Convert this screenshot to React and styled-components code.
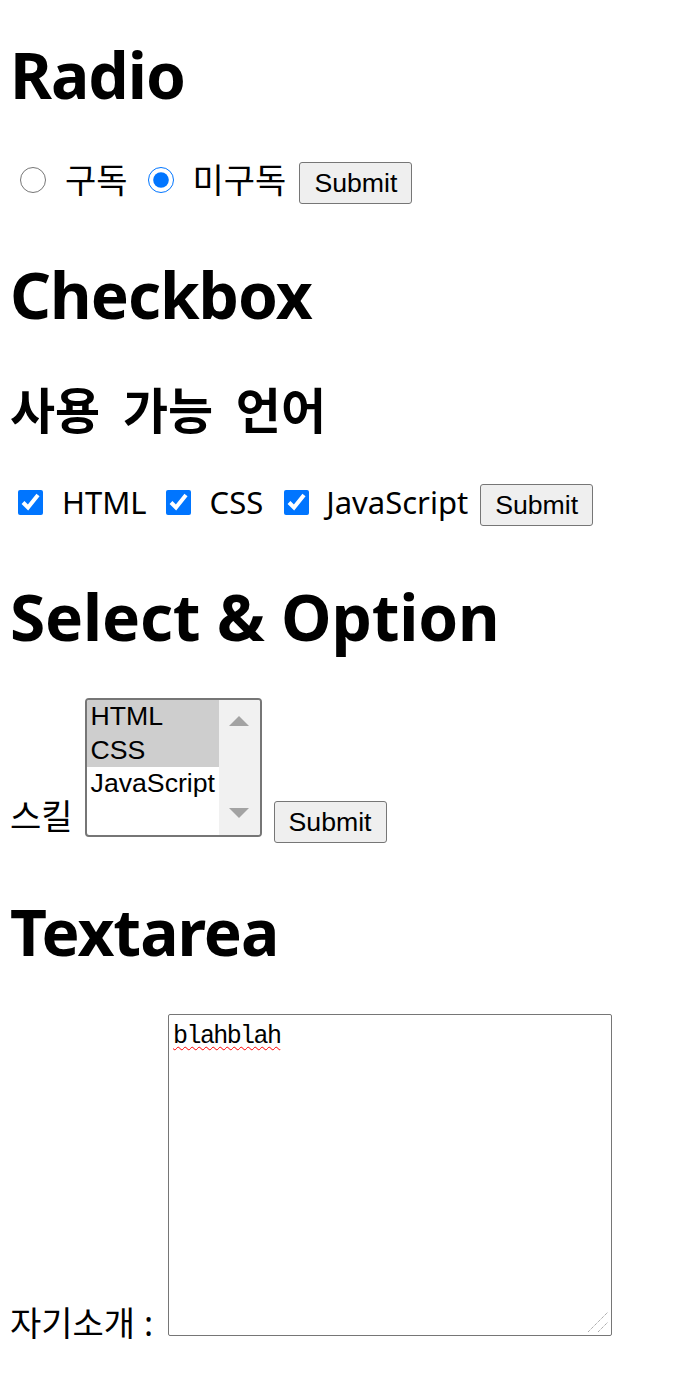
import React from 'react'
import styled, { createGlobalStyle } from 'styled-components'

const GlobalStyle = createGlobalStyle`
    body {
        margin: 0;
        background: #fff;
        color: #000;
        font-family: "Noto Sans", "Noto Sans CJK KR", sans-serif;
    }
`

const Page = styled.main`
    padding: 0 10px 40px;
`

const Title = styled.h1`
    margin: ${p => p.$mt}px 0 0;
    font-size: 64px;
    line-height: 64px;
    font-weight: 700;
    letter-spacing: ${p => p.$ls ?? -1}px;
`

const SubTitle = styled.h2`
    margin: ${p => p.$mt}px 0 0;
    font-size: 49px;
    line-height: 48px;
    font-weight: 700;
    word-spacing: 10px;
`

const Row = styled.form`
    display: flex;
    align-items: ${p => p.$align || 'center'};
    margin-top: ${p => p.$mt}px;
`

const Choice = styled.label`
    display: flex;
    align-items: center;
    margin-left: ${p => p.$ml}px;
    margin-bottom: 6px;
    font-size: ${p => p.$fs}px;
    line-height: 36px;
    white-space: nowrap;
`

const Toggle = styled.input`
    width: ${p => p.$size}px;
    height: ${p => p.$size}px;
    margin: 0 ${p => p.$gap}px 0 0;
    flex: none;
`

const Submit = styled.button`
    flex: none;
    margin-left: ${p => p.$ml}px;
    height: 42px;
    padding: 0 14px;
    border: 1px solid #767676;
    border-radius: 3px;
    background: #efefef;
    color: #000;
    font-family: "Liberation Sans", Arial, sans-serif;
    font-size: 26.67px;
    line-height: 40px;
`

const FieldLabel = styled.label`
    font-size: 34px;
    line-height: 32px;
    margin-right: ${p => p.$mr}px;
    margin-bottom: ${p => p.$mb}px;
    white-space: nowrap;
`

const ListBox = styled.div`
    display: flex;
    width: 177px;
    height: 139px;
    box-sizing: border-box;
    margin-bottom: 6px;
    border: 2px solid #767676;
    border-radius: 4px;
    background: #fff;
    overflow: hidden;
`

const OptionList = styled.div`
    flex: 1;
`

const OptionItem = styled.div`
    height: 33.5px;
    padding: 0 4px;
    background: ${p => (p.$selected ? '#cecece' : 'transparent')};
    font-family: "Liberation Sans", Arial, sans-serif;
    font-size: 26.67px;
    line-height: 33px;
    white-space: nowrap;
`

const ScrollTrack = styled.div`
    display: flex;
    flex-direction: column;
    justify-content: space-between;
    width: 41px;
    background: #f1f1f1;
`

const ScrollArrow = styled.div`
    display: flex;
    align-items: center;
    justify-content: center;
    height: ${p => p.$h}px;

    &::after {
        content: '';
        border-left: 10px solid transparent;
        border-right: 10px solid transparent;
        ${p => (p.$down ? 'border-top' : 'border-bottom')}: 10px solid #a3a3a3;
    }
`

const TextBox = styled.div`
    position: relative;
    width: 444px;
    height: 322px;
    box-sizing: border-box;
    margin-bottom: 3px;
    padding: 7px 4px;
    border: 1px solid #767676;
    border-radius: 2px;
    background: #fff;
    font-family: "Liberation Mono", monospace;
    font-size: 25px;
    line-height: 30px;
    letter-spacing: -1.6px;
`

const Misspelled = styled.span`
    text-decoration: underline wavy #ff0000;
    text-decoration-thickness: 1px;
    text-underline-offset: 3px;
`

const Grip = styled.svg`
    position: absolute;
    right: 2px;
    bottom: 2px;
`

const skills = [
    { id: 'html', name: 'HTML', selected: true },
    { id: 'css', name: 'CSS', selected: true },
    { id: 'js', name: 'JavaScript', selected: false },
]

const App = () => {
    return (
        <Page>
            <GlobalStyle />

            <Title $mt={43}>Radio</Title>
            <Row $mt={55} onSubmit={e => e.preventDefault()}>
                <Choice $ml={10} $fs={34}>
                    <Toggle type='radio' name='subscribe' $size={26} $gap={19} />
                    구독
                </Choice>
                <Choice $ml={20} $fs={34}>
                    <Toggle type='radio' name='subscribe' $size={26} $gap={19} defaultChecked />
                    미구독
                </Choice>
                <Submit $ml={13}>Submit</Submit>
            </Row>

            <Title $mt={59}>Checkbox</Title>
            <SubTitle $mt={59}>사용 가능 언어</SubTitle>
            <Row $mt={50} onSubmit={e => e.preventDefault()}>
                <Choice $ml={8} $fs={31}>
                    <Toggle type='checkbox' $size={25} $gap={19} defaultChecked />
                    HTML
                </Choice>
                <Choice $ml={19} $fs={31}>
                    <Toggle type='checkbox' $size={25} $gap={19} defaultChecked />
                    CSS
                </Choice>
                <Choice $ml={21} $fs={31}>
                    <Toggle type='checkbox' $size={25} $gap={17} defaultChecked />
                    JavaScript
                </Choice>
                <Submit $ml={12}>Submit</Submit>
            </Row>

            <Title $mt={59} $ls={-0.2}>Select &amp; Option</Title>
            <Row $mt={49} $align='flex-end' onSubmit={e => e.preventDefault()}>
                <FieldLabel $mr={12} $mb={11}>스킬</FieldLabel>
                <ListBox role='listbox' aria-multiselectable='true'>
                    <OptionList>
                        {skills.map(skill => (
                            <OptionItem key={skill.id} role='option' $selected={skill.selected}>
                                {skill.name}
                            </OptionItem>
                        ))}
                    </OptionList>
                    <ScrollTrack>
                        <ScrollArrow $h={42} />
                        <ScrollArrow $h={44} $down />
                    </ScrollTrack>
                </ListBox>
                <Submit $ml={12}>Submit</Submit>
            </Row>

            <Title $mt={57}>Textarea</Title>
            <Row $mt={50} $align='flex-end' onSubmit={e => e.preventDefault()}>
                <FieldLabel $mr={15} $mb={0}>자기소개 :</FieldLabel>
                <TextBox role='textbox' aria-multiline='true'>
                    <Misspelled>blahblah</Misspelled>
                    <Grip width='22' height='22' viewBox='0 0 22 22'>
                        <path d='M1 21 L21 1 M11 21 L21 11' stroke='#8a8a8a' strokeWidth='1' strokeDasharray='1 1' />
                    </Grip>
                </TextBox>
            </Row>
        </Page>
    )
}

export default App
